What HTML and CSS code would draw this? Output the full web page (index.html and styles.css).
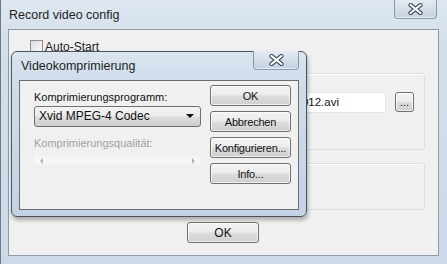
FILE: index.html
```html
<!DOCTYPE html>
<html lang="en">
<head>
    <meta charset="UTF-8">
    <title>Record video config</title>
    <link rel="stylesheet" href="styles.css">
</head>
<body>
    <div class="window">
        <div class="titlebar">
            <span class="title">Record video config</span>
            <button class="close close-main">
                <svg width="15" height="12" viewBox="0 0 15 12"><path d="M2.5 2 L12.5 10 M12.5 2 L2.5 10" stroke="#3d4b5c" stroke-width="4.2" stroke-linecap="round"/><path d="M2.5 2 L12.5 10 M12.5 2 L2.5 10" stroke="#fff" stroke-width="2.2" stroke-linecap="round"/></svg>
            </button>
        </div>
        <div class="client">
            <label class="check"><span class="box"></span>Auto-Start</label>
            <div class="group group-file">
                <div class="field">2012.avi</div>
                <button class="btn browse">...</button>
            </div>
            <div class="group group-empty"></div>
            <div class="actions">
                <button class="btn btn-main">OK</button>
            </div>
        </div>

        <div class="dialog">
            <div class="titlebar dialog-titlebar">
                <span class="title">Videokomprimierung</span>
                <button class="close close-dialog">
                    <svg width="15" height="12" viewBox="0 0 15 12"><path d="M2.5 2 L12.5 10 M12.5 2 L2.5 10" stroke="#3d4b5c" stroke-width="4.2" stroke-linecap="round"/><path d="M2.5 2 L12.5 10 M12.5 2 L2.5 10" stroke="#fff" stroke-width="2.2" stroke-linecap="round"/></svg>
                </button>
            </div>
            <div class="dialog-client">
                <div class="codec-col">
                    <div class="label">Komprimierungsprogramm:</div>
                    <div class="combo">Xvid MPEG-4 Codec<span class="arrow"></span></div>
                    <div class="label label-disabled">Komprimierungsqualität:</div>
                    <div class="slider"><span class="tri tri-left"></span><span class="tri tri-right"></span></div>
                </div>
                <div class="button-col">
                    <button class="btn">OK</button>
                    <button class="btn">Abbrechen</button>
                    <button class="btn">Konfigurieren...</button>
                    <button class="btn">Info...</button>
                </div>
            </div>
        </div>
    </div>
</body>
</html>
```

FILE: styles.css
```css
body { margin: 0; background: #fff; font-family: "Liberation Sans", Arial, sans-serif; }
.window { position: relative; width: 447px; height: 264px; box-sizing: border-box; padding: 0 8px 8px 7px; display: flex; flex-direction: column; background: linear-gradient(to bottom, #dfe8f1 0, #d3dfeb 40px, #cbd9e8 100%); border-left: 1px solid #6c7a88; }
.titlebar { height: 29px; display: flex; align-items: flex-start; }
.title { font-size: 12.5px; color: #1e1e1e; margin-top: 8px; margin-left: 1px; }
.close { margin-left: auto; width: 43px; height: 19px; padding: 0; display: flex; align-items: center; justify-content: center; border: 1px solid #8a99aa; border-top: none; border-radius: 0 0 4px 4px; background: linear-gradient(to bottom, #e4ebf3 0, #d4dee9 50%, #c4d1df 100%); box-shadow: inset 0 -1px 0 rgba(255,255,255,0.6); }
.close-main { margin-right: 2px; }
.client { flex: 1; background: #f0f0f0; border: 1px solid #8d9aa7; padding: 10px 13px 0 12px; display: flex; flex-direction: column; font-size: 12px; }
.check { display: flex; align-items: center; height: 13px; margin-left: 9px; color: #222; gap: 2px; }
.box { width: 11px; height: 11px; border: 1px solid #8f8f8f; background: linear-gradient(135deg, #dcdcdc, #fbfbfb); }
.group { border: 1px solid #d9dfe3; border-radius: 3px; box-shadow: inset 1px 1px 0 #fff; }
.group-file { margin-top: 20px; height: 77px; box-sizing: border-box; display: flex; align-items: flex-start; padding: 18px 10px 0 60px; gap: 9px; }
.field { flex: 1; height: 21px; box-sizing: border-box; border: 1px solid #e2e3ea; background: #fff; padding: 3px 46px 0 0; text-align: right; white-space: nowrap; overflow: hidden; color: #111; font-size: 11.5px; }
.group-empty { margin-top: 13px; height: 47px; box-sizing: border-box; }
.actions { margin-top: 12px; display: flex; justify-content: center; }
.btn { font-family: "Liberation Sans", Arial, sans-serif; font-size: 11px; color: #111; height: 21px; padding: 0; border: 1px solid #707070; border-radius: 3px; background: linear-gradient(to bottom, #f4f4f4 0, #ebebeb 48%, #dddddd 52%, #cfcfcf 100%); box-shadow: inset 0 0 0 1px rgba(255,255,255,0.7); }
.browse { width: 19px; height: 20px; margin-top: 0; font-size: 11px; line-height: 12px; }
.btn-main { width: 72px; font-size: 12px; }

.dialog { position: absolute; left: 10px; top: 51px; width: 296px; height: 166px; box-sizing: border-box; padding: 0 7px 6px 7px; display: flex; flex-direction: column; border: 1px solid #4a545e; border-radius: 6px; background: linear-gradient(to bottom, #dbe5f0 0, #cfdcea 30px, #c3d3e4 100%); box-shadow: 1px 3px 4px rgba(0,0,0,0.3); }
.dialog-titlebar { height: 28px; }
.dialog-titlebar .title { margin-top: 7px; margin-left: 2px; font-size: 12.5px; }
.close-dialog { width: 46px; margin-right: 0; margin-top: -1px; }
.dialog-client { flex: 1; background: #f0f0f0; border: 1px solid #6e6e6e; padding: 4px 0 0 14px; display: flex; gap: 9px; }
.codec-col { width: 167px; display: flex; flex-direction: column; }
.label { font-size: 11px; line-height: 13px; color: #111; margin-top: 6px; }
.label-disabled { color: #a0a0a0; margin-top: 10px; }
.combo { position: relative; margin-top: 2px; height: 21px; box-sizing: border-box; border: 1px solid #707070; border-radius: 3px; background: linear-gradient(to bottom, #f4f4f4 0, #ebebeb 48%, #dddddd 52%, #cfcfcf 100%); font-size: 12px; line-height: 19px; padding-left: 4px; color: #111; }
.arrow { position: absolute; right: 6px; top: 7px; border-left: 4px solid transparent; border-right: 4px solid transparent; border-top: 4px solid #111; }
.slider { margin-top: 3px; height: 15px; display: flex; justify-content: space-between; align-items: center; padding: 0 6px; background: linear-gradient(to bottom, #f0f0f0, #f8f8f8 50%, #ececec); }
.tri { width: 0; height: 0; border-top: 3px solid transparent; border-bottom: 3px solid transparent; }
.tri-left { border-right: 3px solid #b4b4b4; }
.tri-right { border-left: 3px solid #b4b4b4; }
.button-col { width: 81px; display: flex; flex-direction: column; gap: 5px; }
.button-col .btn { width: 81px; font-size: 11px; letter-spacing: -0.2px; }
```
